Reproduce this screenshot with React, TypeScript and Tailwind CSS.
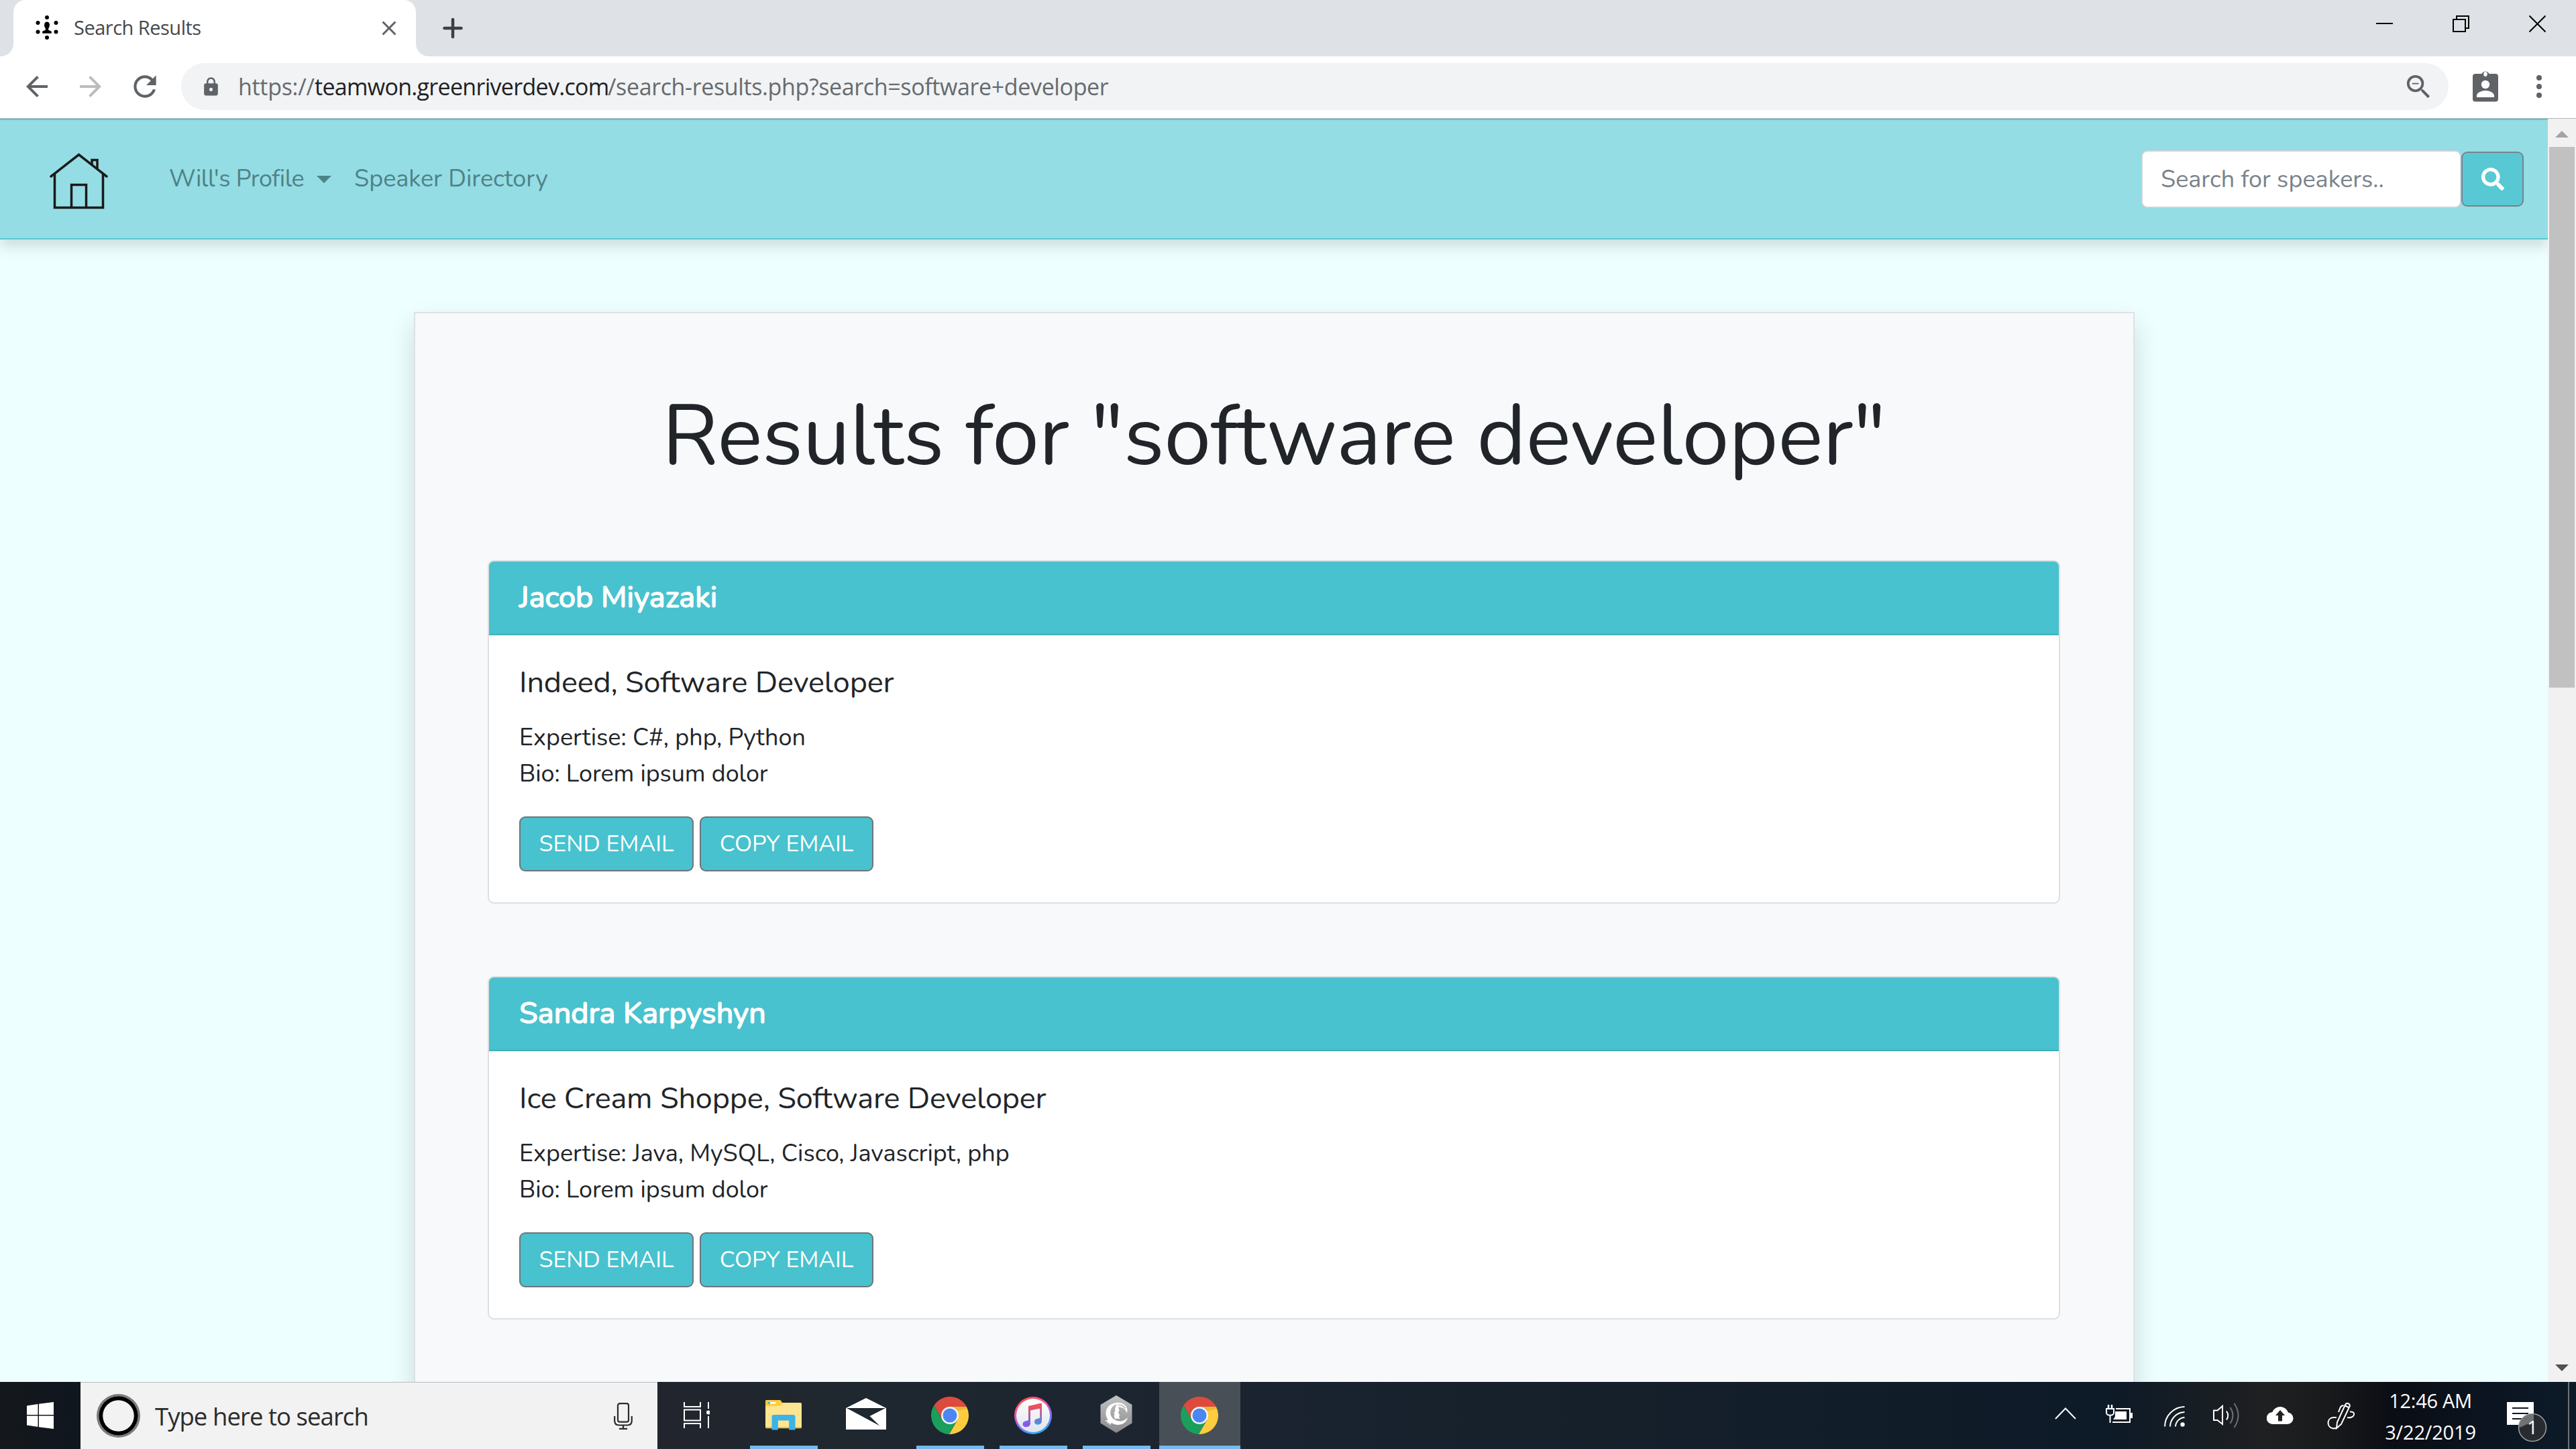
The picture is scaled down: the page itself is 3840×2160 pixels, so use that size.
import React from "react";
import { FaSearch } from "react-icons/fa";
import { MdArrowBack, MdArrowForward, MdClose, MdLock, MdRefresh, MdZoomOut } from "react-icons/md";

type Speaker = { name: string; role: string; expertise: string; bio: string };

const speakers: Speaker[] = [
  {
    name: "Jacob Miyazaki",
    role: "Indeed, Software Developer",
    expertise: "C#, php, Python",
    bio: "Lorem ipsum dolor",
  },
  {
    name: "Sandra Karpyshyn",
    role: "Ice Cream Shoppe, Software Developer",
    expertise: "Java, MySQL, Cisco, Javascript, php",
    bio: "Lorem ipsum dolor",
  },
];

/* ---------- Browser chrome ---------- */

function Favicon() {
  return (
    <svg width="34" height="38" viewBox="0 0 34 38" fill="#000">
      <circle cx="17" cy="3" r="3" />
      <circle cx="17" cy="33" r="3" />
      <circle cx="3.5" cy="11" r="3" />
      <circle cx="30.5" cy="11" r="3" />
      <circle cx="3.5" cy="24.5" r="3" />
      <circle cx="30.5" cy="24.5" r="3" />
      <path d="M13 14c0-6 8-6 8 0c0 3-1.4 4.5-1.8 5.6v2.2l4.6 2v3H10.200v-3l4.600-2v-2.200C14.400 18.500 13 17 13 14z" />
    </svg>
  );
}

function TabStrip() {
  return (
    <div className="flex h-[84px] shrink-0 bg-[#dee1e6]">
      <div className="flex w-[20px] items-end bg-[#dee1e6]">
        <svg width="20" height="20" viewBox="0 0 20 20">
          <path d="M20 0v20H0C12 20 20 12 20 0z" fill="#fff" />
        </svg>
      </div>
      <div className="flex h-[84px] w-[600px] items-center rounded-t-[18px] bg-white pb-[3px] pl-[33px]">
        <div className="w-[34px] pt-[3px]">
          <Favicon />
        </div>
        <span className="ml-[23px] text-[29px] leading-[40px] tracking-[-0.5px] whitespace-nowrap text-[#45484d]">
          Search Results
        </span>
        <MdClose className="mr-[22px] ml-auto mt-[2px]" size={36} color="#5f6368" />
      </div>
      <div className="flex w-[20px] items-end">
        <svg width="20" height="20" viewBox="0 0 20 20">
          <path d="M0 0v20h20C8 20 0 12 0 0z" fill="#fff" />
        </svg>
      </div>
      <div className="flex items-center pl-[20px]">
        <svg width="30" height="32" viewBox="0 0 30 32" stroke="#3c4043" strokeWidth="4.5" strokeLinecap="round">
          <path d="M15 3v26M2.500 16h25" />
        </svg>
      </div>
      <div className="ml-auto flex items-start gap-[89px] pt-[22px] pr-[45px]">
        <svg width="25" height="27" viewBox="0 0 25 27" fill="#000">
          <rect x="0" y="12" width="25" height="2" />
        </svg>
        <svg width="25" height="27" viewBox="0 0 25 27" fill="none" stroke="#000" strokeWidth="2">
          <rect x="1" y="7" width="18" height="18" />
          <path d="M6 7V2h18v18h-5" />
        </svg>
        <svg width="25" height="27" viewBox="0 0 25 27" stroke="#000" strokeWidth="2">
          <path d="M.5 1.500l24 24M24.500 1.500l-24 24" />
        </svg>
      </div>
    </div>
  );
}

function Toolbar() {
  return (
    <div className="flex h-[93px] shrink-0 items-center border-b border-[#b3b5b8] bg-white pb-[2px]">
      <div className="flex w-[270px] items-center pl-[31px]">
        <MdArrowBack size={48} color="#5f6368" />
        <MdArrowForward className="ml-[32px]" size={48} color="#babcbe" />
        <MdRefresh className="ml-[32px]" size={50} color="#5f6368" />
      </div>
      <div className="flex h-[70px] w-[3380px] items-center rounded-full bg-[#f1f3f4]">
        <MdLock className="ml-[29px]" size={31} color="#5f6368" />
        <div className="ml-[25px] flex text-[34px] leading-[48px] whitespace-nowrap">
          <span className="w-[114px] tracking-[-0.3px] text-[#666a6f]">https://</span>
          <span className="w-[437px] tracking-[-0.7px] text-[#202124]">teamwon.greenriverdev.com</span>
          <span className="tracking-[-0.37px] text-[#666a6f]">/search-results.php?search=software+developer</span>
        </div>
        <MdZoomOut className="mr-[21px] ml-auto" size={47} color="#5f6368" />
      </div>
      <svg className="ml-[36px] mt-[-2px]" width="38" height="48" viewBox="0 0 38 48">
        <path
          d="M4 6h9.500a6 6 0 0 1 11 0H34a4 4 0 0 1 4 4v33.500a4 4 0 0 1-4 4H4a4 4 0 0 1-4-4V10a4 4 0 0 1 4-4z"
          fill="#5f6368"
        />
        <ellipse cx="19" cy="6.500" rx="2.800" ry="3.400" fill="#fff" />
        <circle cx="19" cy="22" r="6.200" fill="#fff" />
        <path d="M6 41v-2.500c0-4.500 7.500-7.500 13-7.500s13 3 13 7.500V41z" fill="#fff" />
      </svg>
      <svg className="ml-[57px]" width="8" height="34" viewBox="0 0 8 34" fill="#5f6368">
        <circle cx="4" cy="4" r="4" />
        <circle cx="4" cy="17" r="4" />
        <circle cx="4" cy="30" r="4" />
      </svg>
    </div>
  );
}

/* ---------- Page ---------- */

function HouseLogo() {
  return (
    <svg width="87" height="84" viewBox="0 0 87 84" fill="none" stroke="#1a1a1a" strokeWidth="3.500">
      <path d="M2 35L43.500 2.500L85 35" strokeLinecap="round" />
      <path d="M7.500 31v50.500h72V31" />
      <path d="M32.500 81V47.500h22V81" />
      <path d="M63 17V10.500h8V23" />
    </svg>
  );
}

function Navbar() {
  return (
    <nav className="relative flex h-[180px] shrink-0 items-center border-y-2 border-[#58c8d3] bg-[#94dde4] shadow-[0_10px_20px_rgba(0,0,0,0.14)]">
      <div className="ml-[74px] w-[87px] pt-[6px]">
        <HouseLogo />
      </div>
      <div className="ml-[91px] flex items-center text-[36px] leading-[54px] whitespace-nowrap text-[#4f8287]">
        <span className="w-[202px] tracking-[-0.5px]">Will's Profile</span>
        <span className="mr-[34px] ml-[18px] h-0 w-0 border-x-[11px] border-t-[11px] border-x-transparent border-t-[#4f8287]" />
        <span>Speaker Directory</span>
      </div>
      <div className="mr-[36px] ml-auto flex items-center">
        <div className="flex h-[86px] w-[477px] items-center rounded-[9px] border-2 border-[#ced4da] bg-white pt-[2px] pl-[27px] text-[36px] leading-[54px] text-[#79838c]">
          Search for speakers..
        </div>
        <div className="flex h-[82px] w-[93px] items-center justify-center rounded-[9px] border-2 border-[#76838b] bg-[#58c9d4]">
          <FaSearch size={34} color="#fff" />
        </div>
      </div>
    </nav>
  );
}

function EmailButton({ label, className }: { label: string; className: string }) {
  return (
    <button
      className={
        "flex h-[82px] items-center justify-center rounded-[9px] border-2 border-[#6c757d] bg-[#48c2ce] pt-[1px] text-[34px] leading-[51px] whitespace-nowrap text-white " +
        className
      }
    >
      {label}
    </button>
  );
}

function SpeakerCard({ speaker }: { speaker: Speaker }) {
  return (
    <section className="h-[512px] overflow-hidden rounded-[9px] border-2 border-[#dfdfdf] bg-white">
      <h5 className="h-[110px] border-b-2 border-[#41afba] bg-[#48c2ce] pt-[27px] pl-[45px] text-[45px] leading-[54px] tracking-[0.05px] text-white [-webkit-text-stroke:1.6px_white]">
        {speaker.name}
      </h5>
      <div className="px-[45px] pt-[44px]">
        <h5 className="mb-[28px] text-[45px] leading-[54px] tracking-[-0.16px]">{speaker.role}</h5>
        <p className="mb-[36px] text-[36px] leading-[54px]">
          Expertise: {speaker.expertise}
          <br />
          <span className="tracking-[-0.1px]">Bio: {speaker.bio}</span>
        </p>
        <div className="flex gap-[9px]">
          <EmailButton label="SEND EMAIL" className="w-[260px]" />
          <EmailButton label="COPY EMAIL" className="w-[259px]" />
        </div>
      </div>
    </section>
  );
}

function Scrollbar() {
  return (
    <div className="flex w-[42px] shrink-0 flex-col items-center bg-[#f1f1f1]">
      <div className="flex h-[42px] items-center pt-[3px]">
        <svg width="20" height="10" viewBox="0 0 20 10">
          <path d="M0 10L10 0l10 10z" fill="#a3a3a3" />
        </svg>
      </div>
      <div className="h-[806px] w-[38px] bg-[#c1c1c1]" />
      <div className="mt-auto flex h-[42px] items-center">
        <svg width="20" height="10" viewBox="0 0 20 10">
          <path d="M0 0L10 10L20 0z" fill="#505050" />
        </svg>
      </div>
    </div>
  );
}

function Page() {
  return (
    <div className="flex h-[1883px] shrink-0">
      <div className="flex h-full w-[3798px] flex-col overflow-hidden bg-[#edffff] font-['Nunito','Lato',sans-serif] text-[#212529]">
        <Navbar />
        <main className="mt-[108px] ml-[617px] h-[1700px] w-[2565px] shrink-0 border-2 border-[#dee2e6] bg-[#f8f9fb] pt-[108px] pr-[109px] pl-[108px] shadow-[0_18px_36px_rgba(0,0,0,0.15)]">
          <h1 className="mb-[109px] text-center text-[126px] leading-[151px] tracking-[-0.29px] whitespace-nowrap">
            Results for "software developer"
          </h1>
          <div className="flex flex-col gap-[108px]">
            {speakers.map((s) => (
              <SpeakerCard key={s.name} speaker={s} />
            ))}
          </div>
        </main>
      </div>
      <Scrollbar />
    </div>
  );
}

/* ---------- Taskbar ---------- */

function ChromeIcon() {
  return (
    <svg width="56" height="56" viewBox="0 0 56 56">
      <path d="M4.340 13.020A28 28 0 0 1 52.800 15H28L16.740 34.500z" fill="#dc4b3e" />
      <path d="M52.800 15A28 28 0 0 1 26.860 56L39.260 34.500L28 15z" fill="#ffcb3f" />
      <path d="M26.860 56A28 28 0 0 1 4.340 13.020L16.740 34.500L39.260 34.500z" fill="#1a9f5c" />
      <path d="M28 15h24.800l1 3-18 4z" fill="#d9a42f" opacity="0.5" />
      <circle cx="28" cy="28" r="13" fill="#f4f4f4" />
      <circle cx="28" cy="28" r="10.500" fill="#4a87f2" />
    </svg>
  );
}

function ExplorerIcon() {
  return (
    <svg width="54" height="45" viewBox="0 0 54 45">
      <path d="M0 2a2 2 0 0 1 2-2h20l3 4h27a2 2 0 0 1 2 2v34a2 2 0 0 1-2 2H2a2 2 0 0 1-2-2z" fill="#ffe591" />
      <path d="M0 9V2a2 2 0 0 1 2-2h20l3.500 4.500L22 9z" fill="#ffcd3a" />
      <path d="M0 40h54v.500a1.800 1.800 0 0 1-1.800 1.800H1.800A1.800 1.800 0 0 1 0 40.500z" fill="#e8c25a" />
      <rect x="3.500" y="3" width="3.500" height="2.600" fill="#3bb4e7" />
      <rect x="7" y="3" width="8.500" height="2.600" fill="#fff" />
      <path d="M9.500 44.500V25a3 3 0 0 1 3-3h29a3 3 0 0 1 3 3v19.500h-9.300V30.500H18.800v14z" fill="#3bb4e7" />
    </svg>
  );
}

function MailIcon() {
  return (
    <svg width="60" height="47" viewBox="0 0 60 47" fill="#fff">
      <path d="M30 0L60 15v32H0V15z" />
      <path d="M1 15h58L35.500 27l15 14.500z" fill="#1f272f" />
    </svg>
  );
}

function ItunesIcon() {
  return (
    <svg width="56" height="56" viewBox="0 0 56 56">
      <defs>
        <linearGradient id="it-ring" x1="0.3" y1="0" x2="0.7" y2="1">
          <stop offset="0" stopColor="#ff4f50" />
          <stop offset="0.3" stopColor="#f0559e" />
          <stop offset="0.6" stopColor="#8b6cf5" />
          <stop offset="1" stopColor="#1fb6fb" />
        </linearGradient>
        <linearGradient id="it-face" x1="0" y1="0" x2="0" y2="1">
          <stop offset="0" stopColor="#ffffff" />
          <stop offset="1" stopColor="#dfe4ea" />
        </linearGradient>
        <linearGradient id="it-beam" x1="0" y1="0" x2="0" y2="1">
          <stop offset="0" stopColor="#f9514f" />
          <stop offset="0.45" stopColor="#c9558f" />
          <stop offset="0.75" stopColor="#7a68e6" />
          <stop offset="1" stopColor="#8d4ff5" />
        </linearGradient>
        <linearGradient id="it-stem" x1="0" y1="0" x2="0" y2="1">
          <stop offset="0" stopColor="#f9514f" />
          <stop offset="0.45" stopColor="#b35a9c" />
          <stop offset="1" stopColor="#3f97f2" />
        </linearGradient>
      </defs>
      <circle cx="28" cy="28" r="28" fill="url(#it-ring)" />
      <circle cx="28" cy="28" r="25" fill="url(#it-face)" />
      <path
        d="M41 9.500v27c0 3-2.500 5.200-6 5.200c-3 0-5-1.700-5-4.200c0-3 2.600-4.600 6-5c1.600-.2 2.200-.8 2.200-2V17.500L36 18V10.700z"
        fill="url(#it-stem)"
      />
      <path
        d="M21 14l17.500-3.900v7.300L24 20.500v19c0 3.300-2.400 5.700-6.200 5.700c-3 0-5.300-1.600-5.300-4.200c0-2.800 2.500-4.600 5.800-5c2-.2 2.700-.8 2.700-2.500z"
        fill="url(#it-beam)"
      />
    </svg>
  );
}

function LizardHexIcon() {
  return (
    <svg width="48" height="56" viewBox="0 0 48 56">
      <defs>
        <linearGradient id="hex" x1="0" y1="0" x2="0" y2="1">
          <stop offset="0" stopColor="#c2c3c4" />
          <stop offset="1" stopColor="#88898b" />
        </linearGradient>
      </defs>
      <path d="M24 0l23.500 14v27.500L24 56L.5 41.500V14z" fill="url(#hex)" />
      {/* tail curling round the left side and under the body */}
      <path
        d="M24 11C14 12 7.500 19.500 8.500 28.500c.5 3.500 1.500 5.500 3 7.500L7 38.500l4.500.5-1.500 3 3.500-1 1 3.500 2.500-3.500c7 5 17.500 3.500 22-3c1-1.500 1.700-3.200 2-5c-4 4.500-9.500 6.500-15 5C18 36 14.500 30 15.500 23.500C16.500 18 20 14.500 24.500 13.500z"
        fill="#fff"
      />
      {/* head and back */}
      <path
        d="M24 11c7-1.500 14 2.500 16 8.500c.8 3 .6 5-.6 7c-.4-4-3-6.800-7-8.300c-2-.7-4-.9-5.400-.4l1.500 4.500-1.500 3.500l2 3.500l-1 2.200l1.600 4-3.600-1-3 1c-2.500-2-3-5-1.500-8l-1.500-2 2.300-1c0-3.500-.6-6.500 2.200-10z"
        fill="#fff"
      />
      <path d="M27 14.500c4-.5 8 1.500 10.500 5" fill="none" stroke="#a9aaac" strokeWidth="1.300" />
    </svg>
  );
}

function TaskItem({ children, running, active, className }: { children: React.ReactNode; running?: boolean; active?: boolean; className: string }) {
  return (
    <div className={"flex h-full shrink-0 flex-col items-center " + (active ? "bg-[#494f57] " : "") + className}>
      <div className="flex h-[95px] items-center pt-[4px] pr-[2px]">{children}</div>
      <div className={"h-[5px] w-full " + (running ? "bg-[#76b9ed]" : "bg-transparent")} />
    </div>
  );
}

function SystemTray() {
  return (
    <div className="ml-auto flex h-full items-center">
      <svg className="mt-[-6px] mr-[44px]" width="32" height="18" viewBox="0 0 32 18" fill="none" stroke="#fff" strokeWidth="2">
        <path d="M1 17L16 1.500L31 17" />
      </svg>
      <svg className="mr-[47px] mt-[-4px]" width="40" height="28" viewBox="0 0 40 28" fill="none" stroke="#fff" strokeWidth="2">
        <path d="M15 6h21v20H10" />
        <path d="M14 10h17v12H11c1-2 3-3 3-6z" fill="#fff" stroke="none" />
        <rect x="37" y="12" width="3" height="8" fill="#fff" stroke="none" />
        <path d="M1 6h11v6c0 5-11 5-11 0zM6.500 15v12" />
        <path d="M4 0v6M9 0v6" strokeWidth="2.500" />
      </svg>
      <svg className="mr-[42px] mt-[2px]" width="31" height="31" viewBox="0 0 31 31" fill="none" stroke="#fff" strokeWidth="2">
        <path d="M1 30.500A30 30 0 0 1 30.500 1M9 30.500A22 22 0 0 1 30.500 9M17 30.500A14 14 0 0 1 30.500 17" />
        <circle cx="27.500" cy="27.500" r="3.200" fill="#fff" stroke="none" />
      </svg>
      <svg className="mr-[39px]" width="41" height="38" viewBox="0 0 41 38" fill="none" stroke="#fff" strokeWidth="2">
        <path d="M1 11.500h5.500L14 5v27L6.500 26H1z" />
        <path d="M20 12.500q4.500 6.500 0 13" />
        <path d="M25.500 7q8 12 0 24" stroke="#6b7078" />
        <path d="M31.500 1q12 18 0 36" stroke="#6b7078" />
      </svg>
      <svg className="mr-[50px] mt-[-1px]" width="40" height="27" viewBox="0 0 40 27">
        <path d="M9 27a9 9 0 0 1-.5-18A12.500 12.500 0 0 1 32 9.500A8.800 8.800 0 0 1 31 27z" fill="#fff" />
        <path d="M20 6l7 8h-4v8.500h-6V14h-4z" fill="#222" />
      </svg>
      <svg className="mr-[45px]" width="41" height="41" viewBox="0 0 41 41" fill="none" stroke="#fff" strokeWidth="2">
        <path d="M14 39l1-9L27 4c2-4 8-1.500 6.500 2.500L21 33z" />
        <path d="M26 5l7 3.500M24.500 5.500c-3-1-4 1-5 3L17 15" />
        <path d="M14 23H9C-1 24-1 38 9 39.500c3 0 5-.5 7-2" />
        <path d="M30 23c5 1 9-1 10-4s-2-5-6-4.500" />
      </svg>
      <div className="w-[136px] pt-[1px] text-center text-[29px] leading-[47px] whitespace-nowrap text-white">
        <div className="tracking-[-0.3px]">12:46 AM</div>
        <div className="tracking-[-0.2px]">3/22/2019</div>
      </div>
      <svg className="ml-[46px] mt-[19px]" width="60" height="60" viewBox="0 0 60 60">
        <path d="M0 0h40v34H23l-6 6v-6H0z" fill="#fff" />
        <path d="M8 9h24M8 17h24M8 25h24" stroke="#0d1722" strokeWidth="2" />
        <circle cx="38" cy="38" r="20.500" fill="#2b2d30" fillOpacity="0.93" stroke="#a0a0a0" strokeWidth="1.500" />
        <path d="M18 34a20 20 0 0 1 22-15.500V28L24 36l-5 2z" fill="#808080" opacity="0.8" />
        <text x="38" y="48" textAnchor="middle" fontSize="28" fill="#fff" fontFamily="Open Sans, sans-serif">
          1
        </text>
      </svg>
      <div className="mr-[10px] ml-[31px] h-full w-[2px] bg-[#6d7178]" />
    </div>
  );
}

function Taskbar() {
  return (
    <footer className="flex h-[100px] shrink-0 bg-[linear-gradient(90deg,#14181c_0px,#10161f_120px,#22252d_980px,#1f272f_1250px,#1b2430_1800px,#15202b_2400px,#0d1a27_3150px,#1f2021_3380px,#191a1c_3470px,#0a0d14_3570px,#0b1420_3700px,#0d1b29_3840px)]">
      <div className="flex w-[120px] shrink-0 items-center justify-center">
        <svg width="40" height="40" viewBox="0 0 40 40" fill="#fff">
          <path d="M0 5.500L16.500 3v16H0zM18 2.800L40 0v19H18zM0 20.500h16.500V37L0 34.500zM18 20.500h22V40L18 37.200z" />
        </svg>
      </div>
      <div className="flex w-[860px] shrink-0 items-center border-t border-[#b8bcbd] bg-[#f2f2f2]">
        <svg className="ml-[24px]" width="65" height="65" viewBox="0 0 65 65">
          <circle cx="32.500" cy="32.500" r="32.500" fill="#7c7c7c" />
          <circle cx="32.500" cy="32.500" r="29" fill="#000" />
          <circle cx="32.500" cy="32.500" r="23.300" fill="#f2f2f2" />
        </svg>
        <span className="ml-[22px] text-[36.5px] leading-[50px] tracking-[-0.95px] whitespace-nowrap text-[#2b2b2b]">
          Type here to search
        </span>
        <svg className="mr-[37px] ml-auto" width="28" height="40" viewBox="0 0 28 40" fill="none" stroke="#2b2b2b" strokeWidth="2.200">
          <rect x="6" y="1.200" width="16" height="27.500" rx="3" />
          <path d="M1.200 20v7q0 6.500 6.500 6.500h12.600q6.500 0 6.500-6.500v-7M14 33.500v5M8 38.800h12" />
        </svg>
      </div>
      <TaskItem className="ml-[40px] w-[39px]">
        <svg width="39" height="39" viewBox="0 0 39 39" fill="none" stroke="#fff" strokeWidth="2">
          <path d="M1 0v7h24V0M1 11.500h24v16H1zM1 39v-7h24v7M37 0v10M37 21v18" />
          <circle cx="37" cy="15.500" r="3" fill="#fff" stroke="none" />
        </svg>
      </TaskItem>
      <TaskItem className="ml-[59px] w-[101px]" running>
        <ExplorerIcon />
      </TaskItem>
      <TaskItem className="ml-[43px] w-[60px]">
        <div className="pb-[5px]">
          <MailIcon />
        </div>
      </TaskItem>
      <TaskItem className="ml-[44px] w-[101px]" running>
        <ChromeIcon />
      </TaskItem>
      <TaskItem className="ml-[23px] w-[101px]" running>
        <ItunesIcon />
      </TaskItem>
      <TaskItem className="ml-[23px] w-[101px]" running>
        <div className="pb-[3px]">
          <LizardHexIcon />
        </div>
      </TaskItem>
      <TaskItem className="ml-[13px] w-[121px]" running active>
        <ChromeIcon />
      </TaskItem>
      <SystemTray />
    </footer>
  );
}

export default function App() {
  return (
    <div className="flex h-[2160px] w-[3840px] flex-col overflow-hidden bg-white font-['Open_Sans',sans-serif]">
      <TabStrip />
      <Toolbar />
      <Page />
      <Taskbar />
    </div>
  );
}
